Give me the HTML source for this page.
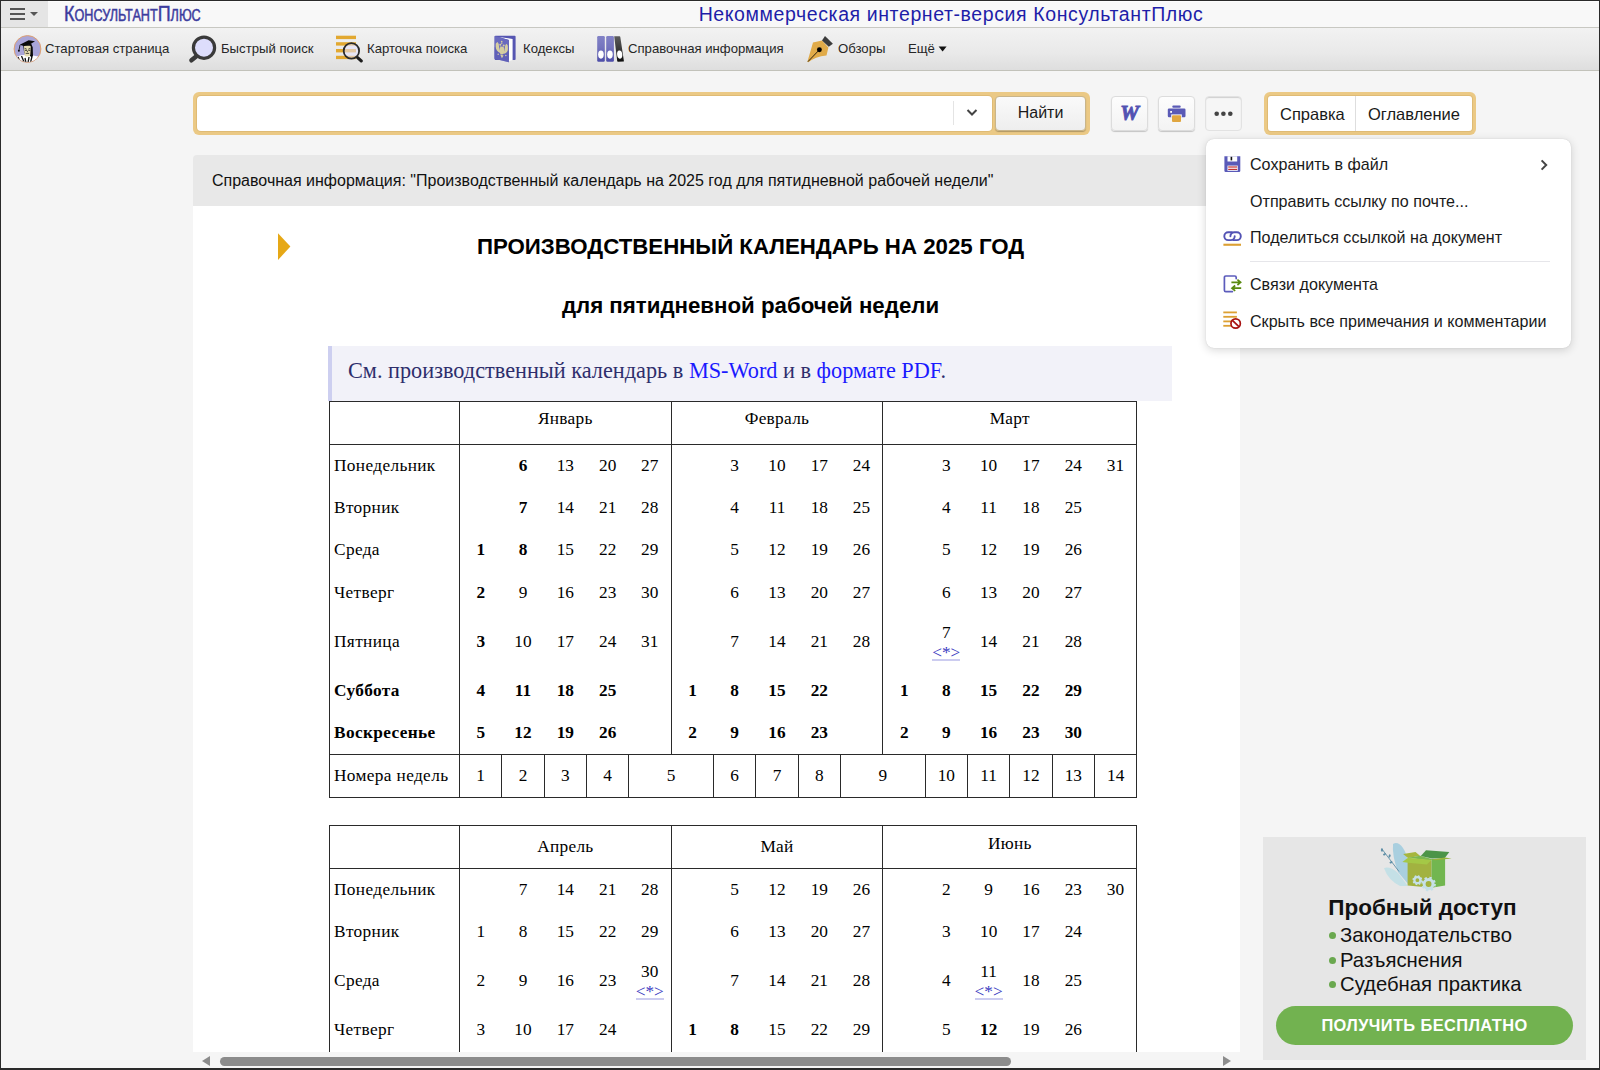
<!DOCTYPE html>
<html lang="ru">
<head>
<meta charset="utf-8">
<title>КонсультантПлюс</title>
<style>
*{box-sizing:border-box;margin:0;padding:0}
html,body{width:1600px;height:1070px;overflow:hidden;background:#f5f5f5;font-family:"Liberation Sans",sans-serif;color:#1a1a1a}
.abs{position:absolute}
#frame{position:absolute;left:0;top:0;width:1600px;height:1070px;border:1px solid #2a2a2a;border-bottom-width:2px;pointer-events:none;z-index:100}
/* top bar */
#topbar{position:absolute;left:0;top:0;width:1600px;height:28px;background:#f8f8f8;box-shadow:inset 0 2px 0 #fdfdfd}
#burger{position:absolute;left:0;top:0;width:48px;height:27px;background:#e5e5e5}
#burger i{position:absolute;left:10px;width:15px;height:2px;background:#555}
#burger b{position:absolute;left:30px;top:12px;border:4px solid transparent;border-top:4px solid #555;border-bottom:0}
#logo{position:absolute;left:64px;top:0;height:27px;line-height:27px;font-size:22.5px;color:#3c3c9e;transform-origin:0 50%;transform:scaleX(.80);white-space:nowrap;letter-spacing:0;-webkit-text-stroke:.5px #3c3c9e}
#logo small{font-size:15.8px}
#ttl{position:absolute;left:300px;width:1302px;top:0;height:28px;line-height:28px;text-align:center;font-size:19.5px;letter-spacing:.6px;color:#1e1ea8;white-space:nowrap}
/* toolbar */
#toolbar{position:absolute;left:0;top:27px;width:1600px;height:44px;background:linear-gradient(#f2f2f2,#e9e9e9 60%,#dedede);border-top:1px solid #c8c8c2;border-bottom:1px solid #c2c2ba}
.tb{position:absolute;top:1px;height:40px;line-height:40px;font-size:13.15px;color:#262626;white-space:nowrap}
.ico{position:absolute}
/* main */
#search{position:absolute;left:193px;top:92px;width:897px;height:43px;border-radius:6px;background:#ebc985}
#sinput{position:absolute;left:4px;top:4px;width:795px;height:35px;background:#fff;border-radius:4px;box-shadow:0 0 0 1px #dfbb75}
#sbtn{position:absolute;left:802px;top:4px;width:91px;height:35px;border-radius:4px;background:linear-gradient(#fafafa,#eeeeee);border:1px solid #c9b58a;box-shadow:0 1px 1px rgba(0,0,0,.25);text-align:center;line-height:32px;font-size:16px;color:#1a1a1a}
.rb{position:absolute;top:96px;width:37px;height:35px;border-radius:4px;background:linear-gradient(#fdfdfd,#f3f3f3);border:1px solid #dcdcdc;box-shadow:0 1px 1px rgba(0,0,0,.2)}
#tabs{position:absolute;left:1263.5px;top:92px;width:212.5px;height:43px;border-radius:6px;background:#ebc985}
#tabs .in{position:absolute;left:4.5px;top:4px;width:204px;height:35px;background:#fff;border-radius:3px;box-shadow:0 0 0 1px #dfbb75}
#tabs span{position:absolute;top:0;height:35px;line-height:36px;font-size:16.5px;color:#1a1a1a}
/* menu */
#menu{position:absolute;left:1206px;top:139px;width:365px;height:209px;background:#fff;border-radius:8px;box-shadow:0 2px 10px rgba(0,0,0,.16),0 0 1px rgba(0,0,0,.2);z-index:20}
.mi{position:absolute;left:44px;height:24px;line-height:24px;margin-top:1px;font-size:16.1px;color:#1a1a1a;white-space:nowrap}
#mic{position:absolute;left:0;top:0;z-index:30}
#wtxt{position:absolute;left:1111px;top:96px;width:37px;height:34px;line-height:34px;text-align:center;font-family:"Liberation Serif",serif;font-weight:bold;font-style:italic;font-size:21px;color:#5252b2;-webkit-text-stroke:.9px #5252b2;letter-spacing:0}
/* doc */
#dochead{position:absolute;left:193px;top:155px;width:1047px;height:51px;background:#e8e8e8;border-radius:4px 4px 0 0;padding-top:1px;line-height:50px;padding-left:19px;font-size:16px;color:#111;white-space:nowrap}
#doc{position:absolute;left:193px;top:206px;width:1047px;height:847px;background:#fff;overflow:hidden}
h1,h2{position:absolute;left:136px;width:843px;text-align:center;font-family:"Liberation Sans",sans-serif;font-weight:bold;color:#000;white-space:nowrap}
h1{top:27px;font-size:22.27px;line-height:28px}
h2{top:86px;font-size:22.27px;line-height:28px}
#note{position:absolute;left:135px;top:140px;width:844px;height:55px;background:#f2f2f9;border-left:4px solid #cdcff0;font-family:"Liberation Serif",serif;font-size:22.27px;line-height:50px;padding-left:16px;color:#2e2e6c;white-space:nowrap}
#note a{color:#1a1aff;text-decoration:none}
table.cal{position:absolute;left:136px;border-collapse:collapse;font-family:"Liberation Serif",serif;font-size:17.3px;color:#000;table-layout:fixed;width:807.3px;background:#fff}
table.cal td{text-align:center;vertical-align:middle;padding:0;white-space:nowrap;line-height:20px}
table.cal td.l{text-align:left;padding-left:4px;letter-spacing:.36px}
table.cal tr.h td{border:1px solid #2a2a2a;letter-spacing:.3px}
table.cal tr.w td{border:1px solid #2a2a2a}
table.cal td.bl{border-left:1px solid #2a2a2a}
table.cal td.br{border-right:1px solid #2a2a2a}
table.cal b{font-weight:bold}
table.cal a{color:#3838c0;text-decoration:none;display:inline-block;line-height:12px;position:relative;top:1px;border-bottom:2px solid #ccccf0}
table.cal .two{line-height:19px}
/* scrollbar */
#hs{position:absolute;left:193px;top:1052px;width:1047px;height:17px;background:#f5f5f5}
#hs .th{position:absolute;left:27px;top:5px;width:791px;height:9px;border-radius:5px;background:#8c8c8c}
#hs .la{position:absolute;left:9px;top:4px;border:5.5px solid transparent;border-right:8px solid #8c8c8c;border-left:0}
#hs .ra{position:absolute;right:9px;top:4px;border:5.5px solid transparent;border-left:8px solid #8c8c8c;border-right:0}
/* ad */
#ad{position:absolute;left:1263px;top:837px;width:323px;height:223px;background:#e6e6e6;font-family:"Liberation Sans",sans-serif}
#ad .t{position:absolute;left:-2px;width:323px;top:57px;text-align:center;font-weight:bold;font-size:22.5px;color:#111;line-height:28px}
#ad .li{position:absolute;left:77px;font-size:20.3px;color:#111;line-height:24px;white-space:nowrap}
#ad .li:before{content:"";position:absolute;left:-11px;top:9px;width:7px;height:7px;border-radius:4px;background:#6aa84f}
#ad .btn{position:absolute;left:13px;top:169px;width:297px;height:39px;border-radius:20px;background:#72b250;color:#fff;font-weight:bold;font-size:16.4px;line-height:39px;text-align:center;letter-spacing:.4px}
</style>
</head>
<body>
<div id="topbar">
  <div id="burger"><i style="top:8px"></i><i style="top:13px"></i><i style="top:18px"></i><b></b></div>
  <div id="logo">К<small>ОНСУЛЬТАНТ</small>П<small>ЛЮС</small></div>
  <div id="ttl">Некоммерческая интернет-версия КонсультантПлюс</div>
</div>
<div id="toolbar">
  <div class="tb" style="left:45px">Стартовая страница</div>
  <div class="tb" style="left:221px">Быстрый поиск</div>
  <div class="tb" style="left:367px">Карточка поиска</div>
  <div class="tb" style="left:523px">Кодексы</div>
  <div class="tb" style="left:628px">Справочная информация</div>
  <div class="tb" style="left:838px">Обзоры</div>
  <div class="tb" style="left:908px">Ещё</div>
</div>

<div id="search"><div id="sinput"></div><div id="sbtn">Найти</div></div>
<div class="rb" style="left:1111px"></div>
<div class="rb" style="left:1158px"></div>
<div class="rb" style="left:1205px;background:#f6f6f6;box-shadow:inset 0 1px 1px rgba(0,0,0,.16);border-color:#e2e2e2"></div>
<div id="wtxt">W</div>
<div id="tabs"><div class="in"><span style="left:12px">Справка</span><i style="position:absolute;left:87px;top:0;width:1px;height:35px;background:#dedede"></i><span style="left:100px">Оглавление</span></div></div>

<div id="dochead">Справочная информация: "Производственный календарь на 2025 год для пятидневной рабочей недели"</div>
<div id="doc">
  <h1>ПРОИЗВОДСТВЕННЫЙ КАЛЕНДАРЬ НА 2025 ГОД</h1>
  <h2>для пятидневной рабочей недели</h2>
  <div id="note">См. производственный календарь в <a>MS-Word</a> и в <a>формате PDF</a>.</div>
<!--TABLES-->
<table class="cal" style="top:195px"><colgroup><col style="width:130px"><col style="width:42.33px"><col style="width:42.33px"><col style="width:42.33px"><col style="width:42.33px"><col style="width:42.33px"><col style="width:42.33px"><col style="width:42.33px"><col style="width:42.33px"><col style="width:42.33px"><col style="width:42.33px"><col style="width:42.33px"><col style="width:42.33px"><col style="width:42.33px"><col style="width:42.33px"><col style="width:42.33px"><col style="width:42.33px"></colgroup>
<tr class="h" style="height:43px"><td></td><td colspan="5" style="padding-bottom:8px">Январь</td><td colspan="5" style="padding-bottom:8px">Февраль</td><td colspan="6" style="padding-bottom:8px">Март</td></tr>
<tr style="height:42.333px"><td class="l bl">Понедельник</td><td class="bl"></td><td><b>6</b></td><td>13</td><td>20</td><td>27</td><td class="bl"></td><td>3</td><td>10</td><td>17</td><td>24</td><td class="bl"></td><td>3</td><td>10</td><td>17</td><td>24</td><td class="br">31</td></tr>
<tr style="height:42.333px"><td class="l bl">Вторник</td><td class="bl"></td><td><b>7</b></td><td>14</td><td>21</td><td>28</td><td class="bl"></td><td>4</td><td>11</td><td>18</td><td>25</td><td class="bl"></td><td>4</td><td>11</td><td>18</td><td>25</td><td class="br"></td></tr>
<tr style="height:42.333px"><td class="l bl">Среда</td><td class="bl"><b>1</b></td><td><b>8</b></td><td>15</td><td>22</td><td>29</td><td class="bl"></td><td>5</td><td>12</td><td>19</td><td>26</td><td class="bl"></td><td>5</td><td>12</td><td>19</td><td>26</td><td class="br"></td></tr>
<tr style="height:42.333px"><td class="l bl">Четверг</td><td class="bl"><b>2</b></td><td>9</td><td>16</td><td>23</td><td>30</td><td class="bl"></td><td>6</td><td>13</td><td>20</td><td>27</td><td class="bl"></td><td>6</td><td>13</td><td>20</td><td>27</td><td class="br"></td></tr>
<tr style="height:56px"><td class="l bl">Пятница</td><td class="bl"><b>3</b></td><td>10</td><td>17</td><td>24</td><td>31</td><td class="bl"></td><td>7</td><td>14</td><td>21</td><td>28</td><td class="bl"></td><td><div class="two">7<br><a>&lt;*&gt;</a></div></td><td>14</td><td>21</td><td>28</td><td class="br"></td></tr>
<tr style="height:42.333px"><td class="l bl"><b>Суббота</b></td><td class="bl"><b>4</b></td><td><b>11</b></td><td><b>18</b></td><td><b>25</b></td><td></td><td class="bl"><b>1</b></td><td><b>8</b></td><td><b>15</b></td><td><b>22</b></td><td></td><td class="bl"><b>1</b></td><td><b>8</b></td><td><b>15</b></td><td><b>22</b></td><td><b>29</b></td><td class="br"></td></tr>
<tr style="height:42.333px"><td class="l bl"><b>Воскресенье</b></td><td class="bl"><b>5</b></td><td><b>12</b></td><td><b>19</b></td><td><b>26</b></td><td></td><td class="bl"><b>2</b></td><td><b>9</b></td><td><b>16</b></td><td><b>23</b></td><td></td><td class="bl"><b>2</b></td><td><b>9</b></td><td><b>16</b></td><td><b>23</b></td><td><b>30</b></td><td class="br"></td></tr>
<tr class="w" style="height:43px"><td class="l">Номера недель</td><td>1</td><td>2</td><td>3</td><td>4</td><td colspan="2">5</td><td>6</td><td>7</td><td>8</td><td colspan="2">9</td><td>10</td><td>11</td><td>12</td><td>13</td><td>14</td></tr>
</table>
<table class="cal" style="top:619px"><colgroup><col style="width:130px"><col style="width:42.33px"><col style="width:42.33px"><col style="width:42.33px"><col style="width:42.33px"><col style="width:42.33px"><col style="width:42.33px"><col style="width:42.33px"><col style="width:42.33px"><col style="width:42.33px"><col style="width:42.33px"><col style="width:42.33px"><col style="width:42.33px"><col style="width:42.33px"><col style="width:42.33px"><col style="width:42.33px"><col style="width:42.33px"></colgroup>
<tr class="h" style="height:43px"><td></td><td colspan="5">Апрель</td><td colspan="5">Май</td><td colspan="6" style="padding-bottom:7px">Июнь</td></tr>
<tr style="height:42.333px"><td class="l bl">Понедельник</td><td class="bl"></td><td>7</td><td>14</td><td>21</td><td>28</td><td class="bl"></td><td>5</td><td>12</td><td>19</td><td>26</td><td class="bl"></td><td>2</td><td>9</td><td>16</td><td>23</td><td class="br">30</td></tr>
<tr style="height:42.333px"><td class="l bl">Вторник</td><td class="bl">1</td><td>8</td><td>15</td><td>22</td><td>29</td><td class="bl"></td><td>6</td><td>13</td><td>20</td><td>27</td><td class="bl"></td><td>3</td><td>10</td><td>17</td><td>24</td><td class="br"></td></tr>
<tr style="height:56px"><td class="l bl">Среда</td><td class="bl">2</td><td>9</td><td>16</td><td>23</td><td><div class="two">30<br><a>&lt;*&gt;</a></div></td><td class="bl"></td><td>7</td><td>14</td><td>21</td><td>28</td><td class="bl"></td><td>4</td><td><div class="two">11<br><a>&lt;*&gt;</a></div></td><td>18</td><td>25</td><td class="br"></td></tr>
<tr style="height:42.333px"><td class="l bl">Четверг</td><td class="bl">3</td><td>10</td><td>17</td><td>24</td><td></td><td class="bl"><b>1</b></td><td><b>8</b></td><td>15</td><td>22</td><td>29</td><td class="bl"></td><td>5</td><td><b>12</b></td><td>19</td><td>26</td><td class="br"></td></tr>
<tr style="height:42.333px"><td class="l bl">Пятница</td><td class="bl">4</td><td>11</td><td>18</td><td>25</td><td></td><td class="bl"><b>2</b></td><td><b>9</b></td><td>16</td><td>23</td><td>30</td><td class="bl"></td><td>6</td><td><b>13</b></td><td>20</td><td>27</td><td class="br"></td></tr>
</table>
<!--/TABLES-->
</div>
<div id="hs"><div class="la"></div><div class="th"></div><div class="ra"></div></div>

<div id="menu">
  <div class="mi" style="top:12px">Сохранить в файл</div>
  <div class="mi" style="top:49px">Отправить ссылку по почте...</div>
  <div class="mi" style="top:85px">Поделиться ссылкой на документ</div>
  <div style="position:absolute;left:44px;top:122px;width:300px;height:1px;background:#e6e6ea"></div>
  <div class="mi" style="top:132px">Связи документа</div>
  <div class="mi" style="top:169px">Скрыть все примечания и комментарии</div>
</div>

<div id="ad">
  <!--ADICON-->
<svg class="ico" style="left:97px;top:-1px" width="120" height="64" viewBox="0 0 120 64">
<path d="M33 8 Q38 5 43 12 Q50 22 48 48 L38 36 Q32 20 33 8Z" fill="#a9cfdf"/>
<path d="M24 32 Q30 30 38 37 L48 50 L40 50 Q28 44 24 32Z" fill="#c4e0e6"/>
<path d="M21.7 12.7 L39 35.5" stroke="#5e8ea6" stroke-width=".9" fill="none"/>
<g fill="#5e8ea6"><ellipse cx="22" cy="14" rx="1.1" ry="1.8"/><ellipse cx="24.5" cy="18.3" rx="1.6" ry="1" transform="rotate(-30 24.5 18.3)"/><ellipse cx="29.6" cy="20" rx="1" ry="1.7" transform="rotate(20 29.6 20)"/><ellipse cx="31" cy="26.3" rx="1.6" ry="1" transform="rotate(-30 31 26.3)"/></g>
<polygon points="43.1,18.0 55.5,16.1 60.0,19.7 48.0,21.9" fill="#a6b63e"/>
<polygon points="48.0,21.8 60.0,19.7 72.0,22.9 71.3,24.8" fill="#7cb850"/>
<polygon points="47.6,24.8 71.6,24.8 71.6,51.8 47.6,49.5" fill="#a2b240"/>
<polygon points="71.6,22.9 85.1,22.5 85.1,49.5 71.6,51.8" fill="#72b650"/>
<polygon points="42.4,25.9 48.0,21.8 71.6,23.9 66.8,28.4 48.0,26.7" fill="#a4c846"/>
<polygon points="60.8,20.1 66.0,14.3 89.3,16.1 84.8,21.9 72.0,22.5" fill="#4c9448"/>
<polygon points="71.6,23.4 84.8,21.5 91.7,22.5 75.0,24.2" fill="#98b43c"/>
<g fill="none" stroke="#c6e0e8"><circle cx="57.4" cy="44.2" r="3" stroke-width="2.2"/><circle cx="57.4" cy="44.2" r="4.2" stroke-width="1.6" stroke-dasharray="1.7 1.6"/>
<circle cx="68.6" cy="48" r="4.5" stroke-width="3"/><circle cx="68.6" cy="48" r="6.3" stroke-width="2" stroke-dasharray="2.4 2.55"/></g>
</svg>
<!--/ADICON-->
  <div class="t">Пробный доступ</div>
  <div class="li" style="top:86px">Законодательство</div>
  <div class="li" style="top:111px">Разъяснения</div>
  <div class="li" style="top:135px">Судебная практика</div>
  <div class="btn">ПОЛУЧИТЬ БЕСПЛАТНО</div>
</div>
<!--ICONS-->
<svg class="ico" style="left:13px;top:34px" width="30" height="30" viewBox="0 0 30 30" >
<defs><clipPath id="avc"><circle cx="14.5" cy="15" r="13"/></clipPath></defs>
<circle cx="14.5" cy="15" r="13.4" fill="#a9a5d8" stroke="#dfa070" stroke-width="1"/>
<g clip-path="url(#avc)">
<path d="M1 23.5 L9 21 L20 21.5 L28 23 L28 30 L1 30Z" fill="#fff"/>
<path d="M5 23l2 5M8.5 22l2.5 6M12 24l1 5M16 23l-1 6M19 22.5l-1.5 6" stroke="#111" stroke-width="1.3"/>
<g transform="translate(.7 1.2)"><path d="M9.5 10 L17.5 8.5 L19 12 L19.3 21 L17.5 22 L16 20 L10.5 18 Z" fill="#0a0a0a"/>
<path d="M10.3 11.5 Q10 10.6 11.5 10.6 L16 10.6 Q17.2 10.6 17.1 12 L16.6 19.5 Q16.3 21.2 14.5 21.2 L12.5 21.2 Q10.9 21 10.8 19.5Z" fill="#e6dcb0"/>
<path d="M11 13.2l2 .8M16.6 13.2l-2 .8M11.3 15.2h2M14.6 15.2h2M12 18.2h3.4M13.7 15.5v1.5" stroke="#222" stroke-width=".8"/>
<path d="M6 9.6 L15 5 L21.3 6 L16.5 9 L10 10.8Z" fill="#0a0a0a"/>
<path d="M6.3 9.8 L5.3 15" stroke="#0a0a0a" stroke-width=".8"/>
<circle cx="5.2" cy="15.6" r="1" fill="#0a0a0a"/>
</g></g></svg>
<svg class="ico" style="left:186px;top:32px" width="36" height="34" viewBox="0 0 36 34" >
<path d="M10.1 24.5 L5.4 28.3" stroke="#3a3a3a" stroke-width="4.4" stroke-linecap="round"/>
<circle cx="18" cy="15.7" r="10.6" fill="#ddddfc" stroke="#3a3a3a" stroke-width="3.2"/></svg>
<svg class="ico" style="left:334px;top:33px" width="30" height="30" viewBox="0 0 30 30" >
<g fill="#e2a830"><rect x="2" y="2.7" width="20" height="3.4"/><rect x="2" y="9.2" width="20" height="3.4"/><rect x="2" y="16" width="20" height="3.4"/><rect x="2" y="22.8" width="20" height="3.3"/></g>
<path d="M23.6 24.6 L27.2 27.9" stroke="#1c1c1c" stroke-width="3.2" stroke-linecap="round"/>
<circle cx="17.4" cy="17.9" r="7.7" fill="#e4e2ff" fill-opacity=".55" stroke="#2a2a2a" stroke-width="1.8"/></svg>
<svg class="ico" style="left:492px;top:33px" width="28" height="32" viewBox="0 0 28 32" >
<rect x="2.6" y="2.7" width="21" height="24.2" rx="1" fill="#5656b2"/>
<path d="M6.8 4 L20.6 5.9 L20.6 26.9 L17 28 L17 7Z" fill="#fff"/>
<path d="M2.6 3 L16.9 7 L16.9 29.3 L2.6 25.8Z" fill="#6a6abf"/>
<path d="M2.6 14 L16.9 18 L16.9 29.3 L2.6 25.8Z" fill="#5a5ab4" fill-opacity=".6"/>
<g fill="#d6cea0">
<path d="M3.75 10.8 Q4.4 9.2 5.6 8.9 Q6.2 9.8 6.75 11.1 Q6.9 13.5 7.5 16 L8.6 19.9 Q6 19.3 4.9 17.5 Q3.6 15.5 3.75 13.8Z"/>
<path d="M15.75 12.6 Q15.2 11.2 14.25 10.8 Q13.5 11.6 13.1 13 Q12.8 15.5 12.4 17.5 L11.3 21 Q13.8 20.6 15 19 Q16.1 17.2 15.9 15.3Z"/>
<ellipse cx="9.9" cy="17.4" rx="2.4" ry="4"/>
<circle cx="8.3" cy="11.7" r="1"/><circle cx="11.7" cy="12.6" r="1"/>
<path d="M8.3 12.5 L9.9 15 L11.7 13.4 L11 16 L8.8 15.6Z"/>
<circle cx="9.7" cy="8.7" r=".85"/><circle cx="9.8" cy="10.4" r=".6"/>
<path d="M8.2 21.6 L11.6 22.4 L9.9 25.2Z"/>
<circle cx="6.2" cy="21.2" r=".75"/><circle cx="13.8" cy="22.4" r=".75"/>
</g></svg>
<svg class="ico" style="left:595px;top:34px" width="32" height="30" viewBox="0 0 32 30" >
<defs><linearGradient id="bg1" x1="0" y1="0" x2="0" y2="1"><stop offset="0" stop-color="#8282c6"/><stop offset=".45" stop-color="#7474be"/><stop offset="1" stop-color="#4c4ca8"/></linearGradient>
<linearGradient id="bg2" x1="0" y1="0" x2="0" y2="1"><stop offset="0" stop-color="#5c5c5c"/><stop offset=".5" stop-color="#3a3a3a"/><stop offset="1" stop-color="#0c0c0c"/></linearGradient></defs>
<rect x="2.2" y="2.1" width="7.6" height="25.7" rx="1.2" fill="url(#bg1)"/>
<rect x="11.2" y="2.1" width="7.7" height="25.7" rx="1.2" fill="url(#bg1)"/>
<path d="M19.2 2.2 L24.6 2.2 Q25.2 2.2 25.3 3 L28.9 27 Q29 27.6 28.2 27.6 L23 27.7 Q22.3 27.7 22.2 27Z" fill="url(#bg2)"/>
<ellipse cx="5.95" cy="20.6" rx="2.8" ry="4.1" fill="#fff"/><ellipse cx="14.95" cy="20.6" rx="2.8" ry="4.1" fill="#fff"/><ellipse cx="24.7" cy="20.6" rx="2.6" ry="4.1" fill="#fff" transform="rotate(-6 24.7 20.6)"/></svg>
<svg class="ico" style="left:804px;top:33px" width="32" height="32" viewBox="0 0 32 32" >
<path d="M3.4 28.75 L9 9.6 L18 7.4 L24.4 14.5 L22.5 22.4 Q11 23.5 4.4 29.3Z" fill="#e1ab49"/>
<path d="M18 7.4 L21 3.1 L28.9 10.75 L24.75 13.75Z" fill="#3c3c3c"/>
<path d="M15.4 16.75 L4 28.6" stroke="#1a1208" stroke-width=".9"/>
<circle cx="15.4" cy="16.75" r="2.45" fill="#000"/></svg>
<svg class="ico" style="left:937px;top:45px" width="11" height="8" viewBox="0 0 11 8" ><path d="M1.6 1.4 L9.6 1.4 L5.6 6.4Z" fill="#111"/></svg>
<svg class="ico" style="left:950px;top:98px" width="40" height="30" viewBox="0 0 40 30" ><path d="M3.5 3 V27" stroke="#e4e4e4" stroke-width="1"/><path d="M17.5 12 L22 16.5 L26.5 12" fill="none" stroke="#444" stroke-width="2"/></svg>
<svg class="ico" style="left:1165px;top:103px" width="24" height="22" viewBox="0 0 24 22" >
<rect x="7.3" y="2.4" width="8.4" height="2.4" rx="1" fill="#5a5ab6"/>
<rect x="2.8" y="5.6" width="17.7" height="8.7" rx="1.2" fill="#5a5ab6"/>
<rect x="5.2" y="8" width="1.8" height="1.8" fill="#fff"/>
<rect x="6.2" y="11.4" width="10.6" height="3.2" fill="#fafafa"/>
<rect x="7" y="12.2" width="9" height="6.8" rx="1" fill="#e0a640"/></svg>
<svg class="ico" style="left:1210px;top:108px" width="28" height="12" viewBox="0 0 28 12" ><g fill="#444"><circle cx="6.7" cy="5.75" r="2.3"/><circle cx="13.4" cy="5.75" r="2.3"/><circle cx="20.3" cy="5.75" r="2.3"/></g></svg>
<svg class="ico" style="left:276px;top:231px" width="18" height="32" viewBox="0 0 18 32" ><path d="M2 2.3 L14.4 15.5 L2 29Z" fill="#e6a816"/></svg>
<!--/ICONS-->
<div id="mic"><!--MICONS-->
<svg class="ico" style="left:1223px;top:155px" width="19" height="19" viewBox="0 0 19 19">
<path d="M1.4 1.3 H17.3 V15.8 Q17.3 17 16.1 17 H2.6 Q1.4 17 1.4 15.8Z" fill="#5a5ab8"/>
<rect x="4.5" y="1.3" width="9.7" height="5.2" fill="#fff"/><rect x="7.6" y="1.8" width="1.6" height="3.6" fill="#111"/>
<rect x="4.5" y="10.6" width="10.3" height="5.2" fill="#fff"/><rect x="5.2" y="11.4" width="9" height="1.2" fill="#c03434"/><rect x="5.2" y="13.8" width="9" height="1.2" fill="#c03434"/></svg>
<svg class="ico" style="left:1222px;top:229px" width="21" height="19" viewBox="0 0 21 19" >
<path d="M9.8 3.3 H6.2 A3.9 3.9 0 0 0 6.2 11.1 H8.8 A3.9 3.9 0 0 0 12.7 7.2" fill="none" stroke="#5252b4" stroke-width="1.9" stroke-linecap="round"/>
<path d="M11.3 11.1 H14.9 A3.9 3.9 0 0 0 14.9 3.3 H12.3 A3.9 3.9 0 0 0 8.4 7.2" fill="none" stroke="#5252b4" stroke-width="1.9" stroke-linecap="round"/>
<rect x="1.4" y="14.7" width="17.6" height="2.1" fill="#dca032"/></svg>
<svg class="ico" style="left:1222px;top:273px" width="22" height="22" viewBox="0 0 22 22" >
<path d="M14.2 5.6 V4.4 Q14.2 3 12.8 3 H3.8 Q2.4 3 2.4 4.4 V17.2 Q2.4 18.6 3.8 18.6 H10.4" fill="none" stroke="#5c5cbc" stroke-width="1.7" stroke-linecap="round"/>
<path d="M9.4 9.3 H17.6 M15.4 6.6 L18.6 9.3 L15.4 12" fill="none" stroke="#5a8a10" stroke-width="1.7"/>
<path d="M19.2 15.2 H11 M13.2 12.5 L10 15.2 L13.2 17.9" fill="none" stroke="#5a8a10" stroke-width="1.7"/></svg>
<svg class="ico" style="left:1222px;top:310px" width="22" height="22" viewBox="0 0 22 22" >
<g fill="#dca032"><rect x="1.3" y="1.5" width="13.6" height="1.8"/><rect x="1.3" y="5.9" width="13.6" height="1.8"/><rect x="1.3" y="10.5" width="9" height="1.8"/><rect x="1.3" y="14.9" width="9" height="1.8"/></g>
<circle cx="13.65" cy="13.5" r="4.7" fill="#fff" stroke="#a81212" stroke-width="1.7"/><path d="M10.4 10.3 L16.9 16.7" stroke="#a81212" stroke-width="1.7"/></svg>
<svg class="ico" style="left:1538px;top:158px" width="12" height="14" viewBox="0 0 12 14" ><path d="M3.6 2.4 L8.2 7 L3.6 11.6" fill="none" stroke="#444" stroke-width="2"/></svg>
<!--/MICONS--></div>
<div id="frame"></div>
</body>
</html>
